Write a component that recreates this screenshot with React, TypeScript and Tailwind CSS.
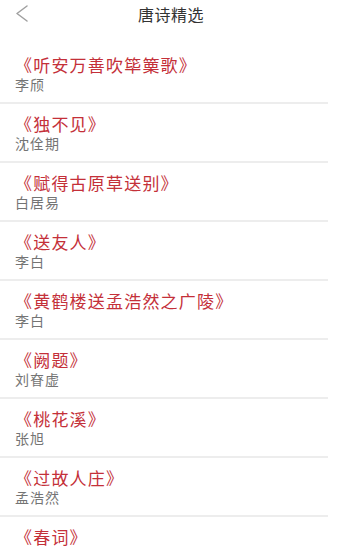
import React from "react";

const poems = [
  { title: "听安万善吹筚篥歌", author: "李颀" },
  { title: "独不见", author: "沈佺期" },
  { title: "赋得古原草送别", author: "白居易" },
  { title: "送友人", author: "李白" },
  { title: "黄鹤楼送孟浩然之广陵", author: "李白" },
  { title: "阙题", author: "刘眘虚" },
  { title: "桃花溪", author: "张旭" },
  { title: "过故人庄", author: "孟浩然" },
  { title: "春词", author: "刘禹锡" },
];

export default function App() {
  return (
    <div
      className="w-[338px] h-[547px] overflow-hidden bg-white"
      style={{ fontFamily: '"Noto Sans CJK SC", "Noto Sans", sans-serif' }}
    >
      <div className="relative flex h-[27px] items-center justify-center">
        <svg
          className="absolute left-[14px] top-[5px]"
          width="15"
          height="17"
          viewBox="0 0 15 17"
          fill="none"
        >
          <path d="M13 1 L3 8.5 L13 16" stroke="#a0a0a0" strokeWidth="1.5" strokeLinecap="round" strokeLinejoin="round" />
        </svg>
        <span className="pl-[4px] text-[16px] tracking-[0.5px] text-[#333333]">唐诗精选</span>
      </div>
      <div className="pt-[18px]">
        {poems.map((p) => (
          <div key={p.title} className="mr-[10px] border-b-2 border-[#ededed] pl-[15px] pt-[9px] pb-[9px]">
            <div className="h-[21px] text-[17px] leading-[21px] tracking-[1.2px] text-[#c43039]">《{p.title}》</div>
            <div className="h-[18px] text-[14px] leading-[18px] tracking-[1px] text-[#747474]">{p.author}</div>
          </div>
        ))}
      </div>
    </div>
  );
}
